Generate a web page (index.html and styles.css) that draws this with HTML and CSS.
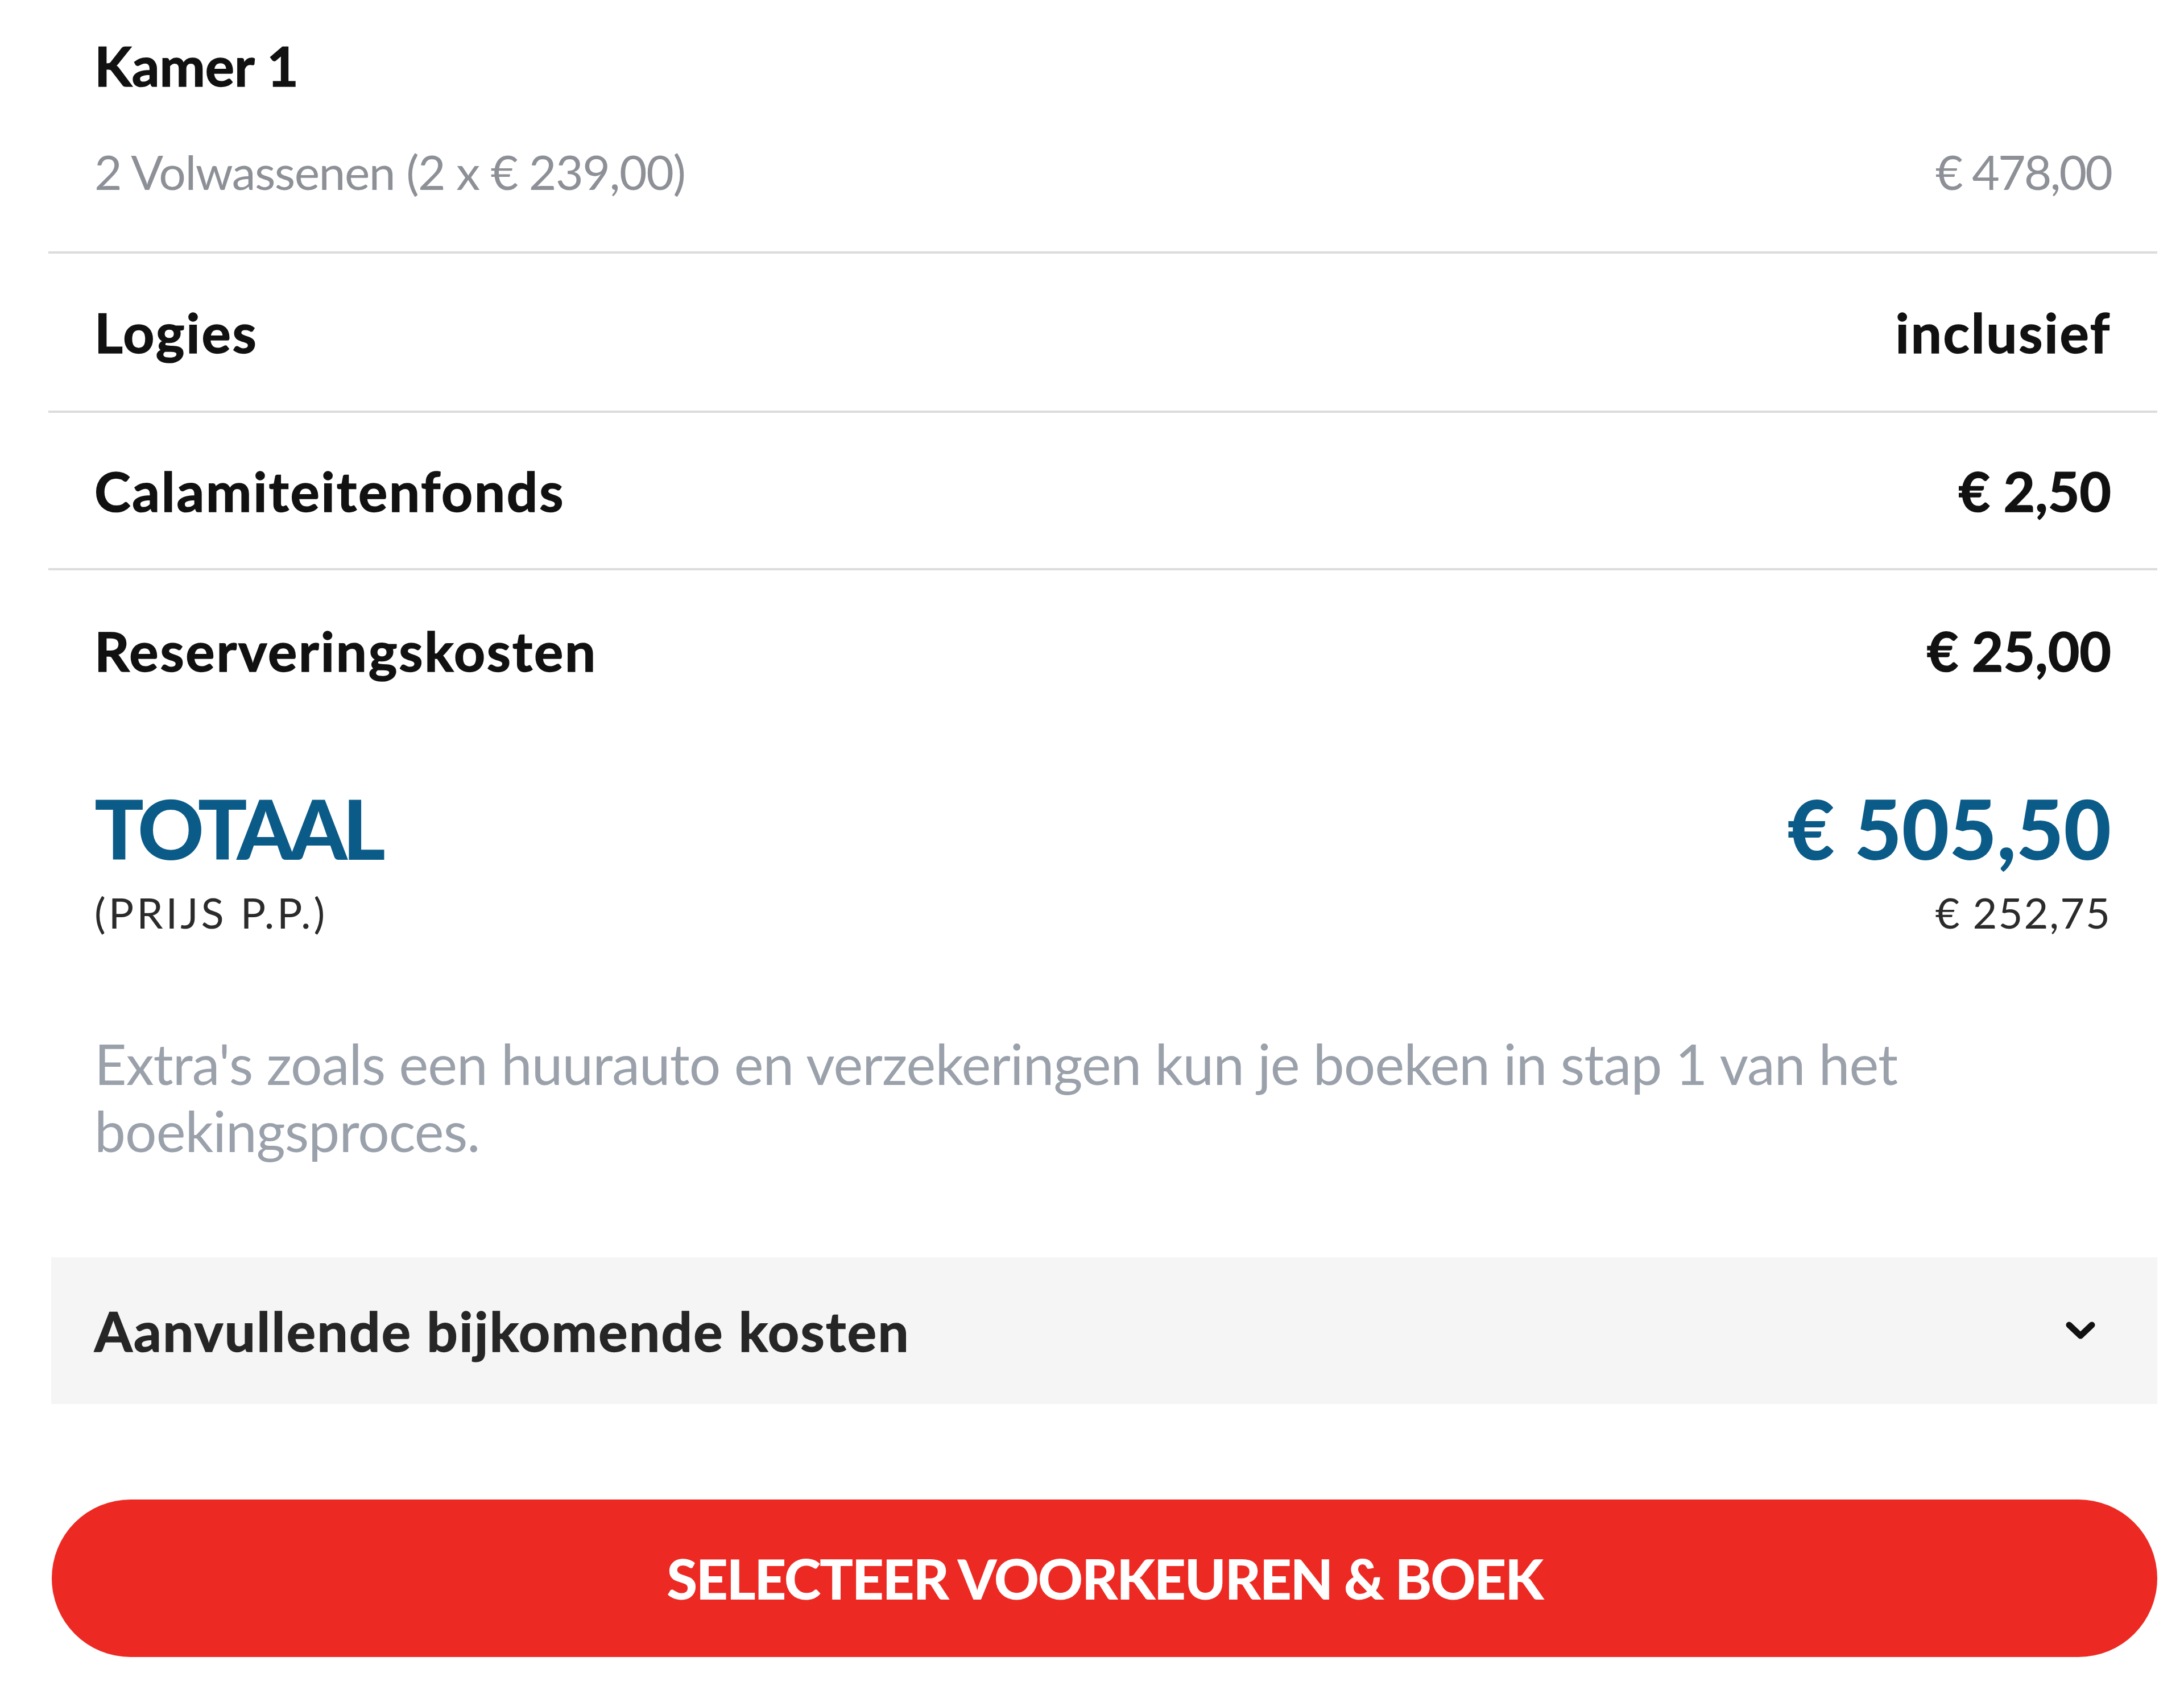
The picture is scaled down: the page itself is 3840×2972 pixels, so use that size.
FILE: index.html
```html
<!DOCTYPE html>
<html lang="nl">
<head>
    <meta charset="UTF-8">
    <meta name="viewport" content="width=device-width, initial-scale=1.0">
    <title>Prijsoverzicht</title>
    <link rel="stylesheet" href="styles.css">
</head>
<body>
    <div class="summary">
        <div class="room">
            <div class="room-title">Kamer 1</div>
            <div class="room-line">
                <span>2 Volwassenen (2 x € 239,00)</span>
                <span class="room-price">€ 478,00</span>
            </div>
        </div>

        <div class="cost-row">
            <span class="cost-label">Logies</span>
            <span class="cost-label">inclusief</span>
        </div>
        <div class="cost-row">
            <span class="cost-label">Calamiteitenfonds</span>
            <span>€ 2,50</span>
        </div>
        <div class="cost-row last">
            <span class="cost-label">Reserveringskosten</span>
            <span>€ 25,00</span>
        </div>

        <div class="total">
            <div class="total-col">
                <div class="total-label word">TOTAAL</div>
                <div class="total-sub">(PRIJS P.P.)</div>
            </div>
            <div class="total-col right">
                <div class="total-label">€ 505,50</div>
                <div class="total-sub">€ 252,75</div>
            </div>
        </div>

        <p class="extras">Extra's zoals een huurauto en verzekeringen kun je boeken in stap 1 van het boekingsproces.</p>

        <div class="accordion">
            <span>Aanvullende bijkomende kosten</span>
            <svg class="chevron" width="54" height="34" viewBox="0 0 54 34">
                <path d="M7 7 L27 26 L47 7" fill="none" stroke="#111" stroke-width="11" stroke-linecap="round" stroke-linejoin="round"/>
            </svg>
        </div>

        <button class="book-btn">Selecteer voorkeuren &amp; boek</button>
    </div>
</body>
</html>
```

FILE: styles.css
```css
* {
    margin: 0;
    padding: 0;
    box-sizing: border-box;
}

body {
    font-family: 'Lato', 'Open Sans', sans-serif;
    background: #fff;
    color: #111;
    width: 3840px;
    height: 2972px;
    overflow: hidden;
}

.summary {
    width: 3708px;
    margin-left: 85px;
}

.room {
    padding: 57px 81px 89px;
    border-bottom: 4px solid #dcdcdc;
}

.room-title {
    font-size: 96px;
    font-weight: 700;
    line-height: 1.2;
    -webkit-text-stroke: 1.5px #111;
}

.room-line {
    display: flex;
    justify-content: space-between;
    margin-top: 80px;
    font-size: 84px;
    line-height: 1.2;
    letter-spacing: -1.5px;
    color: #8d9096;
}

.room-price {
    letter-spacing: -3px;
}

.cost-row {
    display: flex;
    justify-content: space-between;
    align-items: center;
    height: 280px;
    padding: 0 81px;
    font-size: 96px;
    font-weight: 700;
    line-height: 1.2;
    border-bottom: 4px solid #dcdcdc;
    -webkit-text-stroke: 1.5px #111;
}

.cost-label {
    letter-spacing: 2.8px;
}

.cost-row:nth-of-type(3) {
    height: 277px;
}

.cost-row.last {
    height: 282px;
    border-bottom: none;
}

.total {
    display: flex;
    justify-content: space-between;
    margin-top: 100px;
    padding: 0 81px;
}

.total-col.right {
    text-align: right;
}

.total-label {
    font-size: 144px;
    font-weight: 900;
    line-height: 1;
    color: #0b5b89;
}

.total-label.word {
    letter-spacing: -8px;
}

.total-sub {
    margin-top: 32px;
    font-size: 74px;
    line-height: 1.2;
    letter-spacing: 5px;
    color: #2b2b2b;
}

.total-col.right .total-sub {
    letter-spacing: 2px;
}

.extras {
    margin-top: 161px;
    padding: 0 81px;
    max-width: 3400px;
    font-size: 98px;
    line-height: 118px;
    letter-spacing: -0.9px;
    color: #9aa1ab;
}

.accordion {
    display: flex;
    justify-content: space-between;
    align-items: center;
    height: 258px;
    margin: 164px 0 0 5px;
    padding: 0 108px 0 76px;
    background: #f5f5f5;
    font-size: 96px;
    font-weight: 700;
    line-height: 1.2;
    letter-spacing: 2.4px;
    color: #262626;
    -webkit-text-stroke: 1.5px #262626;
}

.chevron {
    display: block;
}

.book-btn {
    display: block;
    width: 3702px;
    height: 277px;
    margin: 168px 0 0 6px;
    border: none;
    border-radius: 139px;
    background: #ec2a23;
    color: #fff;
    font-family: 'Lato', 'Open Sans', sans-serif;
    font-size: 98px;
    font-weight: 900;
    letter-spacing: -2.4px;
    text-transform: uppercase;
    cursor: pointer;
}
```
